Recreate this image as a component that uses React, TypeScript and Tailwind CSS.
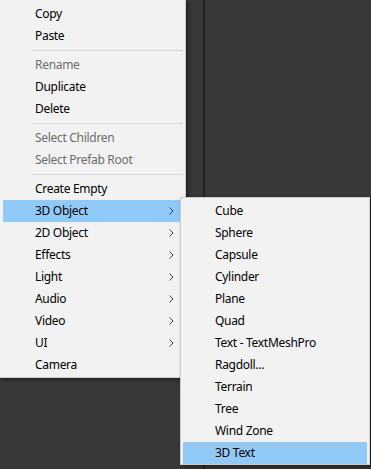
import React from "react";

type Item =
  | { kind: "item"; label: string; disabled?: boolean; sub?: boolean; active?: boolean }
  | { kind: "sep" };

const MAIN: Item[] = [
  { kind: "item", label: "Copy" },
  { kind: "item", label: "Paste" },
  { kind: "sep" },
  { kind: "item", label: "Rename", disabled: true },
  { kind: "item", label: "Duplicate" },
  { kind: "item", label: "Delete" },
  { kind: "sep" },
  { kind: "item", label: "Select Children", disabled: true },
  { kind: "item", label: "Select Prefab Root", disabled: true },
  { kind: "sep" },
  { kind: "item", label: "Create Empty" },
  { kind: "item", label: "3D Object", sub: true, active: true },
  { kind: "item", label: "2D Object", sub: true },
  { kind: "item", label: "Effects", sub: true },
  { kind: "item", label: "Light", sub: true },
  { kind: "item", label: "Audio", sub: true },
  { kind: "item", label: "Video", sub: true },
  { kind: "item", label: "UI", sub: true },
  { kind: "item", label: "Camera" },
];

const SUB: Item[] = [
  "Cube",
  "Sphere",
  "Capsule",
  "Cylinder",
  "Plane",
  "Quad",
  "Text - TextMeshPro",
  "Ragdoll...",
  "Terrain",
  "Tree",
  "Wind Zone",
].map((label) => ({ kind: "item" as const, label }));
SUB.push({ kind: "item", label: "3D Text", active: true });

function Chevron() {
  return (
    <svg width="5" height="8" viewBox="0 0 5 8" className="shrink-0">
      <path d="M0.5 0.5 L4 4 L0.5 7.5" fill="none" stroke="#3c3c3c" strokeWidth="1" />
    </svg>
  );
}

function MenuRows({ items }: { items: Item[] }) {
  return (
    <>
      {items.map((it, i) =>
        it.kind === "sep" ? (
          <div key={i} className="flex h-[7px] items-center pl-[29px]">
            <div className="h-px w-full bg-[#d7d7d7]" />
          </div>
        ) : (
          <div
            key={i}
            className={`flex h-[22px] items-center pl-[32px] pr-[9px] ${
              it.active ? "bg-[#91c9f7]" : ""
            }`}
          >
            <span
              className={`flex-1 whitespace-nowrap ${
                it.disabled ? "text-[#6d6d6d]" : "text-black"
              }`}
            >
              {it.label}
            </span>
            {it.sub && <Chevron />}
          </div>
        )
      )}
    </>
  );
}

export default function App() {
  return (
    <div
      className="relative h-[469px] w-[371px] overflow-hidden bg-[#383838] text-[12px] leading-none tracking-[-0.3px]"
      style={{ fontFamily: '"Noto Sans", "Open Sans", sans-serif' }}
    >
      {/* panel behind the menus */}
      <div className="flex h-full">
        <div className="w-[203px]" />
        <div className="w-[2px] bg-[#232323]" />
        <div className="flex-1" />
      </div>

      {/* context menu */}
      <div className="absolute left-0 top-0 w-[186px] border-b border-r border-[#cccccc] bg-[#f2f2f2] pb-[1px] pl-[3px] pr-[2px] pt-[3px] shadow-[2px_2px_4px_rgba(0,0,0,0.45)]">
        <MenuRows items={MAIN} />
      </div>

      {/* 3D Object submenu */}
      <div className="absolute left-[180px] top-[197px] w-[190px] border border-[#cccccc] bg-[#f2f2f2] pb-0 pl-[2px] pr-[2px] pt-[2px] shadow-[2px_2px_4px_rgba(0,0,0,0.45)]">
        <MenuRows items={SUB} />
      </div>
    </div>
  );
}
